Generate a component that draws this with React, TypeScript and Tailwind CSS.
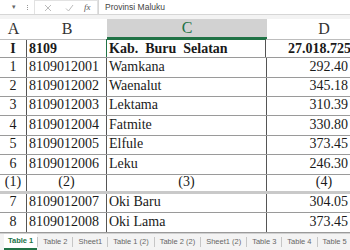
import React from "react";

const serif = { fontFamily: '"Liberation Serif", "Times New Roman", serif' };
const sans = { fontFamily: '"Liberation Sans", Arial, sans-serif' };

type Row = { a: string; b: string; c: string; d: string; h: string; bold?: boolean; center?: boolean; thick?: boolean };

const rows: Row[] = [
  { a: "1", b: "8109012001", c: "Wamkana", d: "292.40", h: "h-[20px]" },
  { a: "2", b: "8109012002", c: "Waenalut", d: "345.18", h: "h-[19px]" },
  { a: "3", b: "8109012003", c: "Lektama", d: "310.39", h: "h-[19px]" },
  { a: "4", b: "8109012004", c: "Fatmite", d: "330.80", h: "h-[20px]" },
  { a: "5", b: "8109012005", c: "Elfule", d: "373.45", h: "h-[19px]" },
  { a: "6", b: "8109012006", c: "Leku", d: "246.30", h: "h-[20px]" },
  { a: "(1)", b: "(2)", c: "(3)", d: "(4)", h: "h-[19px]", center: true, thick: true },
  { a: "7", b: "8109012007", c: "Oki Baru", d: "304.05", h: "h-[19px]" },
  { a: "8", b: "8109012008", c: "Oki Lama", d: "373.45", h: "h-[20px]" },
];

const tabs = ["Table 1", "Table 2", "Sheet1", "Table 1 (2)", "Table 2 (2)", "Sheet1 (2)", "Table 3", "Table 4", "Table 5"];

export default function App() {
  return (
    <div className="w-[350px] h-[250px] overflow-hidden bg-white flex flex-col text-[#1a1a1a]">
      {/* formula bar */}
      <div className="h-[15px] shrink-0 flex items-stretch border-b border-[#d6d6d6] bg-white" style={sans}>
        <div className="w-[22px] shrink-0 flex items-center justify-end pr-[6px] text-[7px] text-[#666]">▾</div>
        <div className="w-[10px] shrink-0 flex flex-col items-center justify-center gap-[1px]">
          <span className="w-[1px] h-[1px] bg-[#999]" />
          <span className="w-[1px] h-[1px] bg-[#999]" />
          <span className="w-[1px] h-[1px] bg-[#999]" />
        </div>
        <div className="w-[64px] shrink-0 flex items-center border border-[#e2e2e2] border-b-0 ml-[2px]">
          <svg width="8" height="8" viewBox="0 0 8 8" className="ml-[9px]">
            <path d="M1 1 L7 7 M7 1 L1 7" stroke="#b3b3b3" strokeWidth="0.9" />
          </svg>
          <svg width="9" height="8" viewBox="0 0 9 8" className="ml-[13px]">
            <path d="M1 4.5 L3.5 7 L8 1" stroke="#b3b3b3" strokeWidth="0.9" fill="none" />
          </svg>
          <span className="ml-[10px] text-[9px] italic text-[#555]" style={serif}>fx</span>
        </div>
        <div className="flex-1 flex items-center border-l border-[#d6d6d6] pl-[6px] text-[8.5px] text-[#444]">
          Provinsi Maluku
        </div>
      </div>
      <div className="h-[4px] shrink-0 bg-[#f3f3f3]" />

      {/* column headers */}
      <div className="h-[20px] shrink-0 flex text-[16px] text-[#333] bg-white" style={serif}>
        <div className="w-[27px] shrink-0 flex items-center justify-center">A</div>
        <div className="w-[80px] shrink-0 flex items-center justify-center">B</div>
        <div className="w-[160px] shrink-0 flex items-center justify-center bg-[#d2d2d2] text-[#217346] border-b-2 border-[#217346]">C</div>
        <div className="w-[114px] shrink-0 flex items-center justify-center">D</div>
      </div>

      {/* row I */}
      <div className="h-[19px] shrink-0 flex border-t border-[#bdbdbd] border-b border-b-[#9a9a9a] text-[14px] font-bold" style={serif}>
        <div className="w-[27px] shrink-0 flex items-center justify-center border-r border-[#555]">I</div>
        <div className="w-[80px] shrink-0 flex items-center pl-[2px] border-r border-[#555]">8109</div>
        <div className="w-[160px] shrink-0 flex items-center pl-[2px] border-r border-[#555] border-t border-t-[#217346] border-l border-l-[#217346] -ml-[1px] -mt-[1px] whitespace-pre">Kab.  Buru  Selatan</div>
        <div className="w-[114px] shrink-0 flex items-center justify-end pr-[29px]">27.018.725</div>
      </div>

      {rows.map((r, i) => (
        <div
          key={i}
          className={`${r.h} shrink-0 flex text-[14px] ${r.thick ? "border-b-[3px] border-[#c9c9c9]" : "border-b border-[#9a9a9a]"}`}
          style={serif}
        >
          <div className="w-[27px] shrink-0 flex items-center justify-center border-r border-[#555] pb-[3px]">{r.a}</div>
          <div className={`w-[80px] shrink-0 flex items-center border-r border-[#555] pb-[3px] ${r.center ? "justify-center" : "pl-[2px]"}`}>{r.b}</div>
          <div className={`w-[160px] shrink-0 flex items-center border-r border-[#555] pb-[3px] ${r.center ? "justify-center" : "pl-[2px]"}`}>{r.c}</div>
          <div className={`w-[114px] shrink-0 flex items-center pb-[3px] ${r.center ? "justify-center" : "justify-end pr-[33px]"}`}>{r.d}</div>
        </div>
      ))}

      {/* sheet tabs */}
      <div className="flex-1 flex items-stretch bg-[#f3f3f3] border-t border-[#d0d0d0] pl-[4px] overflow-hidden whitespace-nowrap" style={sans}>
        {tabs.map((t, i) => (
          <React.Fragment key={t}>
            {i === 0 ? (
              <div className="flex items-center px-[4px] bg-white text-[7.5px] font-bold text-[#217346] border-b-2 border-[#217346]">{t}</div>
            ) : (
              <div className="flex items-center px-[5px] text-[7.5px] text-[#666]">{t}</div>
            )}
            <div className="w-[1px] my-[3px] bg-[#c6c6c6] shrink-0" />
          </React.Fragment>
        ))}
      </div>
    </div>
  );
}
